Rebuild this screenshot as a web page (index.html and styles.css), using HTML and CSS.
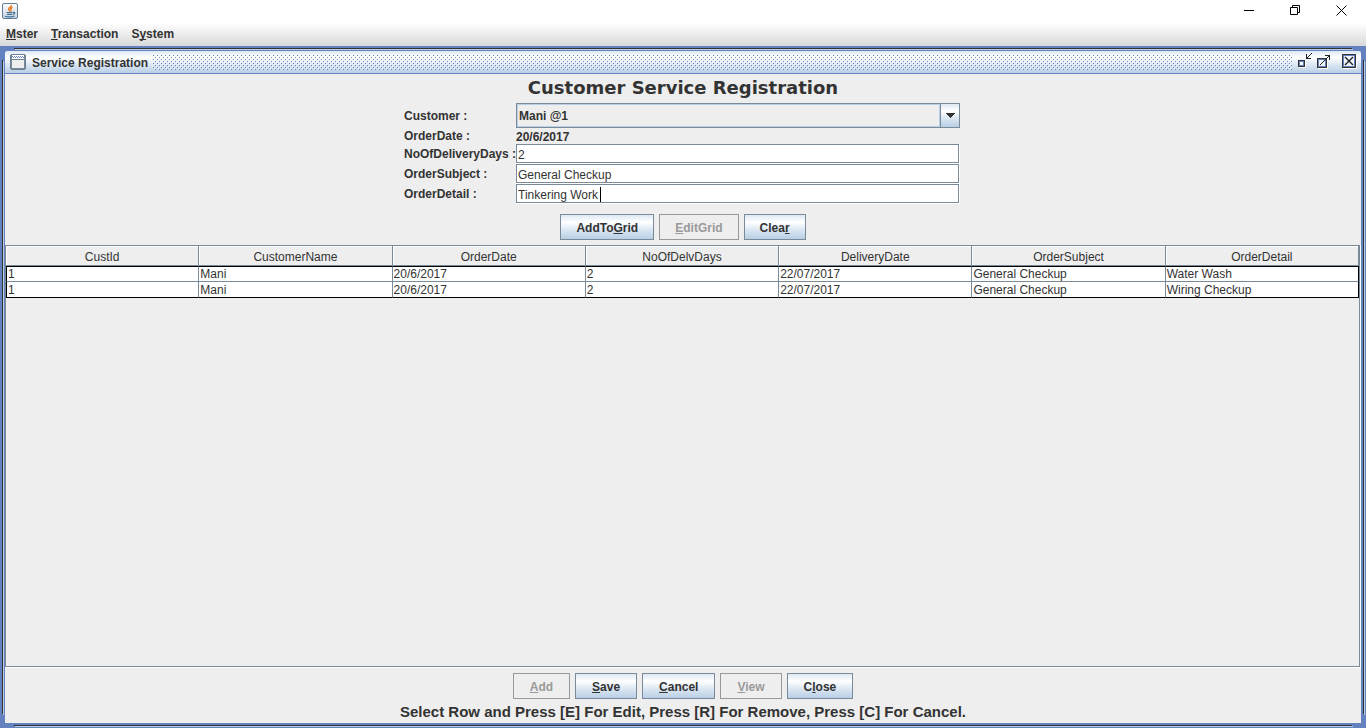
FILE: index.html
```html
<!DOCTYPE html>
<html lang="en">
<head>
<meta charset="utf-8">
<title>Service Registration</title>
<link rel="stylesheet" href="styles.css">
</head>
<body>
<header class="os-bar">
  <svg class="java-icon" width="16" height="16" viewBox="0 0 16 16" aria-hidden="true">
    <defs><linearGradient id="tile" x1="0" y1="0" x2="0" y2="1"><stop offset="0" stop-color="#fff"/><stop offset="1" stop-color="#c4d2de"/></linearGradient></defs>
    <rect x=".5" y=".5" width="15" height="15" rx="1.5" fill="url(#tile)" stroke="#5f7d96"/>
    <path d="M9.5 2C10 4 6.300 4.600 6.600 6.200C6.800 7.200 7.800 7.400 7.700 8.500M10.600 4.300C8.500 5.300 8.200 5.800 9 6.800C9.300 7.400 9 8 8.600 8.500" fill="none" stroke="#e8781e" stroke-width="1.400"/>
    <path d="M4.500 9.500H10.500M5 11.300H10.200M3 13.200C5 14.200 10 14.200 12.500 13M10.800 9.500C13.500 8.700 13.200 11 10.800 11.500" fill="none" stroke="#3f6f96" stroke-width="1.200"/>
  </svg>
  <div class="os-controls">
    <button class="os-button" aria-label="Minimize"><svg width="11" height="11" viewBox="0 0 11 11"><path d="M0 5.500H10" stroke="#000"/></svg></button>
    <button class="os-button" aria-label="Restore"><svg width="11" height="11" viewBox="0 0 11 11"><path d="M.5 2.500H7.500V9.500H.5ZM2.500 2.500V.5H9.500V7.500H7.500" fill="none" stroke="#000"/></svg></button>
    <button class="os-button" aria-label="Close window"><svg width="11" height="11" viewBox="0 0 11 11"><path d="M.5 .5L10.500 10.500M10.500 .5L.5 10.500" stroke="#000"/></svg></button>
  </div>
</header>
<nav class="menu-bar">
  <button class="menu"><u>M</u>ster</button>
  <button class="menu"><u>T</u>ransaction</button>
  <button class="menu">S<u>y</u>stem</button>
</nav>
<main class="frame">
  <i class="groove groove-top"></i><i class="groove groove-bottom"></i>
  <i class="groove groove-left"></i><i class="groove groove-right"></i>
  <div class="title-bar">
    <svg width="16" height="16" viewBox="0 0 16 16" shape-rendering="crispEdges" aria-hidden="true">
      <rect x="1" y="1" width="14" height="14" fill="#eee"/>
      <rect x="1" y="1" width="14" height="4" fill="#fff"/>
      <path d="M2 2.500H14M3 3.500H14" stroke="#6382bf" stroke-dasharray="1 1"/>
      <path d="M1 .5H15M1 15.500H15M.5 1V15M15.500 1V15M1 5.500H15" stroke="#6b7f92"/>
      <path d="M1.500 1V15M14.500 1V15M1 14.500H15" stroke="#7a8a99"/>
    </svg>
    <span class="title-text">Service Registration</span>
    <span class="bumps"></span>
    <div class="frame-controls">
      <button class="frame-button" aria-label="Iconify"><svg width="16" height="16" viewBox="0 0 16 16" shape-rendering="crispEdges">
        <path d="M3 14.500H10M9.500 8V15" stroke="#fff"/><rect x="2.500" y="7.500" width="6" height="6" fill="#fff" stroke="#333"/><rect x="3.500" y="8.500" width="4" height="4" fill="#fff" stroke="#6382bf"/>
        <path d="M10.500 1V6M10 5.500H15M11 4.500H12M12 3.500H13M13 2.500H14M14 1.500H15M15 .5H16" stroke="#222"/></svg></button>
      <button class="frame-button" aria-label="Maximize"><svg width="16" height="16" viewBox="0 0 16 16" shape-rendering="crispEdges">
        <path d="M2 15.500H11.500V6" fill="none" stroke="#fff"/><rect x="1.500" y="5.500" width="9" height="9" fill="#eef4fa" stroke="#333"/><rect x="2.500" y="6.500" width="7" height="7" fill="none" stroke="#6382bf"/>
        <path d="M4 11.500H5M5 10.500H6M6 9.500H7M7 8.500H8M8 7.500H9M9 6.500H10M10 5.500H11M11 4.500H12M12 3.500H13M9 2.500H14M13.500 2V7" stroke="#222"/></svg></button>
      <button class="frame-button" aria-label="Close frame"><svg width="16" height="16" viewBox="0 0 16 16" shape-rendering="crispEdges">
        <path d="M2 15.500H15.500V2" fill="none" stroke="#fff"/><rect x="1.500" y="1.500" width="13" height="13" fill="#eef4fa" stroke="#333"/><rect x="2.500" y="2.500" width="11" height="11" fill="none" stroke="#6382bf"/>
        <path d="M4 4L12 12M12 4L4 12" stroke="#222" stroke-width="1.400" shape-rendering="auto"/></svg></button>
    </div>
  </div>
  <div class="content">
    <h1 class="heading">Customer Service Registration</h1>
    <form class="form" onsubmit="return false">
      <label class="label" for="customer">Customer :</label>
      <div class="combo">
        <select id="customer" class="combo-select"><option>Mani @1</option></select>
        <span class="combo-arrow"><svg width="10" height="5" viewBox="0 0 10 5" shape-rendering="crispEdges"><path d="M0 0H10L5 5Z" fill="#333"/></svg></span>
      </div>
      <label class="label" for="date">OrderDate :</label>
      <output id="date" class="date">20/6/2017</output>
      <label class="label" for="days">NoOfDeliveryDays :</label>
      <div class="field"><input id="days" class="input" type="text" value="2"></div>
      <label class="label" for="subject">OrderSubject :</label>
      <div class="field"><input id="subject" class="input" type="text" value="General Checkup"></div>
      <label class="label" for="detail">OrderDetail :</label>
      <div class="field"><input id="detail" class="input" type="text" value="Tinkering Work"><i class="caret"></i></div>
    </form>
    <div class="buttons grid-buttons">
      <button class="button">AddTo<u>G</u>rid</button>
      <button class="button" disabled><u>E</u>ditGrid</button>
      <button class="button">Clea<u>r</u></button>
    </div>
    <section class="scroll-pane">
      <table class="table">
        <thead><tr><th>CustId</th><th>CustomerName</th><th>OrderDate</th><th>NoOfDelvDays</th><th>DeliveryDate</th><th>OrderSubject</th><th>OrderDetail</th></tr></thead>
        <tbody>
          <tr><td>1</td><td>Mani</td><td>20/6/2017</td><td>2</td><td>22/07/2017</td><td>General Checkup</td><td>Water Wash</td></tr>
          <tr><td>1</td><td>Mani</td><td>20/6/2017</td><td>2</td><td>22/07/2017</td><td>General Checkup</td><td>Wiring Checkup</td></tr>
        </tbody>
      </table>
    </section>
    <div class="buttons">
      <button class="button" disabled><u>A</u>dd</button>
      <button class="button"><u>S</u>ave</button>
      <button class="button"><u>C</u>ancel</button>
      <button class="button" disabled><u>V</u>iew</button>
      <button class="button">C<u>l</u>ose</button>
    </div>
    <p class="hint">Select Row and Press [E] For Edit, Press [R] For Remove, Press [C] For Cancel.</p>
  </div>
</main>
</body>
</html>
```
FILE: styles.css
```css
* { box-sizing: border-box; }

body {
  margin: 0;
  height: 100vh;
  display: flex;
  flex-direction: column;
  overflow: hidden;
  background: #fff;
  color: #333;
  font: bold 12px/16px "Liberation Sans", Arial, sans-serif;
}

button, input, select { font: inherit; color: inherit; margin: 0; }
button { border: 0; padding: 0; background: none; }
svg { display: block; }
u { text-decoration: underline; text-decoration-thickness: 1px; text-underline-offset: 1px; text-decoration-skip-ink: none; }

/* Operating system title bar */
.os-bar { display: flex; justify-content: space-between; height: 23px; flex: none; }
.java-icon { margin: 3px 0 0 2px; }
.os-controls { display: flex; }
.os-button { width: 46px; height: 21px; display: flex; align-items: center; justify-content: center; padding-right: 4px; }

/* Application menu */
.menu-bar {
  display: flex;
  flex: none;
  height: 23px;
  padding: 0 6px;
  gap: 13px;
  background: linear-gradient(#fff, #dadada);
  border-bottom: 1px solid #dadada;
}
.menu { height: 22px; }

/* Internal frame */
.frame {
  position: relative;
  flex: 1;
  min-height: 0;
  display: flex;
  flex-direction: column;
  padding: 5px;
  background: #6382bf;
}
.groove { position: absolute; background: #333; box-shadow: 1px 1px #b8cfe5; }
.groove-top, .groove-bottom { left: 14px; right: 14px; height: 1px; }
.groove-top { top: 2px; }
.groove-bottom { bottom: 2px; }
.groove-left, .groove-right { top: 14px; bottom: 14px; width: 1px; }
.groove-left { left: 2px; }
.groove-right { right: 2px; }

.title-bar {
  display: flex;
  align-items: center;
  flex: none;
  height: 23px;
  padding: 0 4px 0 5px;
  background: linear-gradient(#dde8f3, #fff 30%, #dde8f3 60%, #b8cfe5);
  border-bottom: 1px solid #6382bf;
  border-radius: 2px 2px 0 0;
}
.title-text { margin: 2px 4px 0 6px; }
.bumps {
  flex: 1;
  height: 16px;
  background:
    conic-gradient(from 90deg at 3px 3px, #6382bf 25%, transparent 0) 0 0 / 4px 4px,
    conic-gradient(from 90deg at 3px 3px, #6382bf 25%, transparent 0) 2px 2px / 4px 4px,
    conic-gradient(from 90deg at 3px 3px, #fff 25%, transparent 0) -1px -1px / 4px 4px,
    conic-gradient(from 90deg at 3px 3px, #fff 25%, transparent 0) 1px 1px / 4px 4px;
}
.frame-controls { display: flex; gap: 4px; margin-left: 4px; padding-bottom: 2px; }
.frame-button:last-child { margin-left: 5px; }

.content { flex: 1; min-height: 0; display: flex; flex-direction: column; background: #eee; }
.heading { margin: 0; padding: 3px 0 4px; text-align: center; font: bold 18px/22px "DejaVu Sans", Verdana, sans-serif; }

/* Order form */
.form {
  display: grid;
  grid-template-columns: 110px 1fr;
  align-items: center;
  align-self: center;
  width: 554px;
  max-width: 100%;
}
.label { margin-left: -2px; white-space: nowrap; }
.combo { display: flex; height: 25px; border: 1px solid #7a8a99; }
.combo-select { flex: 1; appearance: none; border: 1px solid #b8cfe5; border-radius: 0; background: #eee; padding: 0 1px; outline: 0; }
.combo-arrow {
  display: flex; align-items: center; justify-content: center;
  width: 19px;
  border-left: 1px solid #7a8a99;
  background: linear-gradient(#dde8f3, #fff 30%, #dde8f3 60%, #b8cfe5);
}
.date { height: 16px; line-height: 18px; }
.field { position: relative; height: 20px; padding: 0 1px 1px 0; background: #fff; }
.input { display: block; width: 100%; height: 19px; padding: 2px 1px 0; border: 1px solid #7a8a99; border-radius: 0; background: #fff; font-weight: normal; outline: 0; }
.caret { position: absolute; left: 84px; top: 3px; width: 1px; height: 15px; background: #000; }

/* Buttons */
.buttons { display: flex; justify-content: center; gap: 5px; padding: 5px 0; }
.grid-buttons { padding: 10px 0 5px; }
.button {
  height: 26px;
  padding: 2px 16px 0;
  border: 1px solid #7a8a99;
  background: linear-gradient(#dde8f3, #fff 30%, #dde8f3 60%, #b8cfe5);
}
.grid-buttons .button { padding: 2px 15px 0; }
.button:disabled { color: #999; background: #eee; border-color: #999; }

/* Order lines */
.scroll-pane { flex: 1; min-height: 0; border: 1px solid #7a8a99; margin: 0 1px 1px 0; box-shadow: 1px 1px #fff; }
.table { width: 100%; table-layout: fixed; border-collapse: separate; border-spacing: 0; font-weight: normal; }
.table th { height: 20px; padding: 2px 0 0; font-weight: normal; text-align: center; line-height: 16px; border-right: 1px solid #7a8a99; border-bottom: 1px solid #7a8a99; box-shadow: inset 1px 1px #fff; }
.table td { height: 16px; padding: 0 1px; line-height: 14px; background: #fff; border-right: 1px solid #7a8a99; border-bottom: 1px solid #7a8a99; }
.table tbody tr:first-child td { border-top: 1px solid #000; }
.table tbody tr:last-child td { border-bottom-color: #000; }
.table td:first-child { border-left: 1px solid #000; }
.table td:last-child { border-right-color: #000; }

.hint { margin: 0; padding-bottom: 3px; text-align: center; font-size: 15px; line-height: 16px; }
```
